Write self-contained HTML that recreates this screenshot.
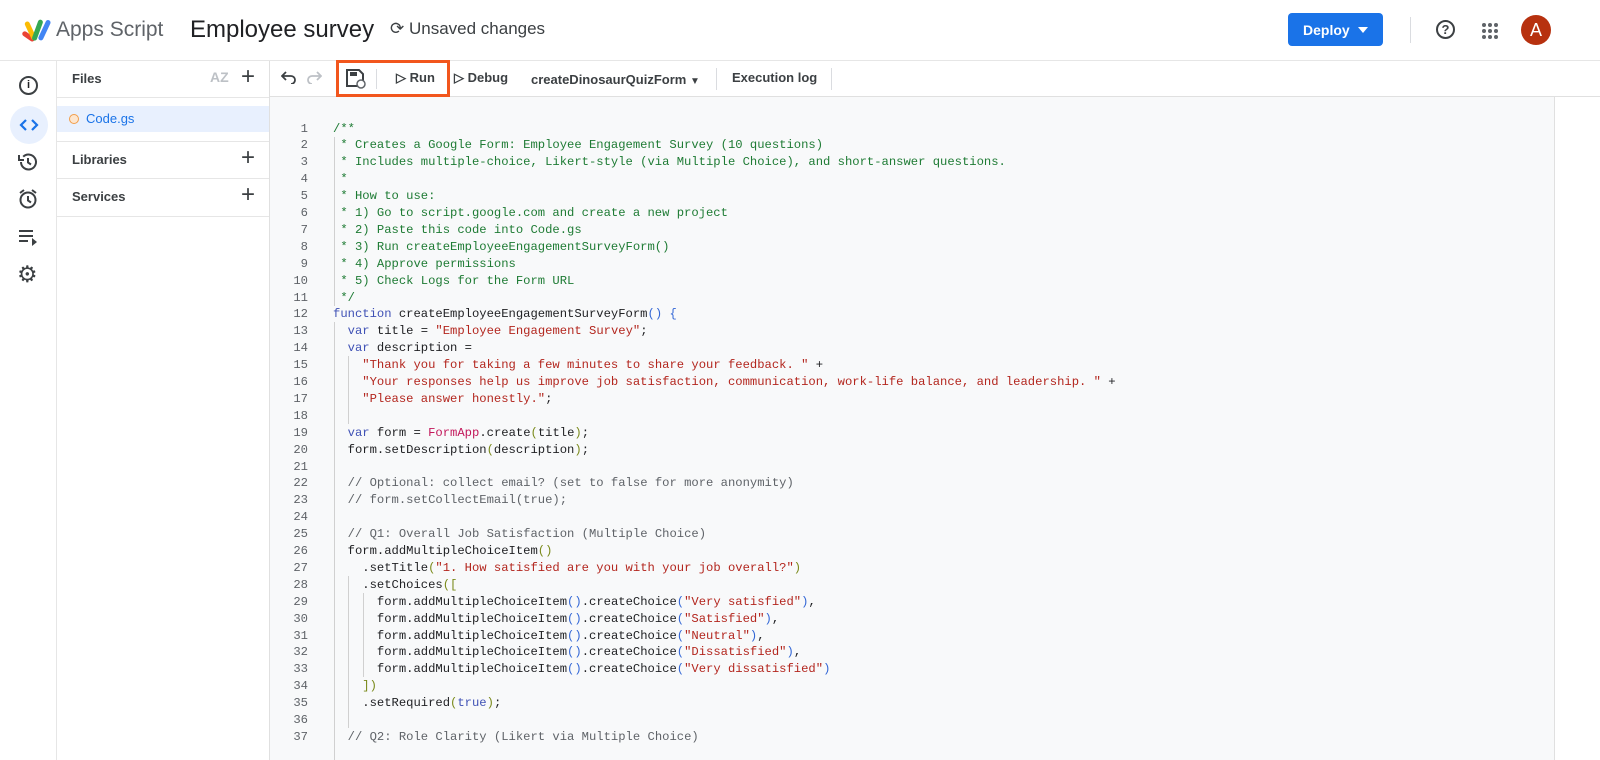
<!DOCTYPE html>
<html><head><meta charset="utf-8"><style>
*{margin:0;padding:0;box-sizing:border-box}
body{width:1600px;height:760px;overflow:hidden;background:#fff;font-family:"Liberation Sans",Arial,sans-serif;position:relative;color:#202124}
.a{position:absolute}
.hd{top:0;left:0;width:1600px;height:61px;border-bottom:1px solid #e6e6e6}
.code{left:270px;top:97px;width:1284px;height:663px;background:#f8f9fa}
.ln{position:absolute;left:270px;width:38px;text-align:right;font:12.2px/16.9px "Liberation Mono",monospace;color:#5f6368}
.cl{position:absolute;left:333px;white-space:pre;font:12.2px/16.9px "Liberation Mono",monospace;color:#202124}
.c{color:#1e7b34}.k{color:#3f51b5}.s{color:#b3261e}.m{color:#c2185b}.g{color:#5f6368}.b{color:#3367d6}.p{color:#7a8a1a}
.gd{position:absolute;width:1px;background:#d0d0d0}
.tb{font-size:13px;font-weight:bold;color:#3c4043}
</style></head><body>
<div class="a hd"></div>
<svg class="a" style="left:20px;top:17px" width="32" height="28" viewBox="0 0 32 28">
<rect x="3" y="13" width="14" height="5" rx="2.5" transform="rotate(35 3 15)" fill="#ea4335"/>
<rect x="8" y="4" width="5" height="20" rx="2.5" transform="rotate(-25 10 14)" fill="#fbbc04"/>
<rect x="15" y="2" width="5" height="22" rx="2.5" transform="rotate(20 17 13)" fill="#34a853"/>
<rect x="22" y="2" width="5" height="22" rx="2.5" transform="rotate(25 24 13)" fill="#4285f4"/>
</svg>
<div class="a" style="left:56px;top:18px;font-size:21px;color:#5f6368">Apps Script</div>
<div class="a" style="left:190px;top:16px;font-size:24px;color:#202124">Employee survey</div>
<div class="a" style="left:390px;top:19px;font-size:17px;color:#3c4043">⟳ Unsaved changes</div>
<div class="a" style="left:1288px;top:13px;width:95px;height:33px;background:#1a73e8;border-radius:4px;color:#fff;font-size:14px;font-weight:bold;padding:9px 0 0 15px">Deploy</div>
<div class="a" style="left:1358px;top:27px;border:5px solid transparent;border-top:6px solid #fff;border-bottom:0"></div>
<div class="a" style="left:1410px;top:17px;width:1px;height:26px;background:#dadce0"></div>
<div class="a" style="left:1436px;top:20px;width:19px;height:19px;border:2px solid #3c4043;border-radius:50%;font-size:13px;font-weight:bold;text-align:center;line-height:15px;color:#3c4043">?</div>
<svg class="a" style="left:1481px;top:22px" width="18" height="18"><g fill="#5f6368"><circle cx="3" cy="3" r="2"/><circle cx="9" cy="3" r="2"/><circle cx="15" cy="3" r="2"/><circle cx="3" cy="9" r="2"/><circle cx="9" cy="9" r="2"/><circle cx="15" cy="9" r="2"/><circle cx="3" cy="15" r="2"/><circle cx="9" cy="15" r="2"/><circle cx="15" cy="15" r="2"/></g></svg>
<div class="a" style="left:1521px;top:15px;width:30px;height:30px;border-radius:50%;background:#b7310f;color:#fff;font-size:18px;text-align:center;line-height:30px">A</div>
<div class="a" style="left:56px;top:61px;width:1px;height:699px;background:#e6e6e6"></div>
<div class="a" style="left:19px;top:76px;width:19px;height:19px;border:2px solid #3c4043;border-radius:50%;font-size:11px;font-weight:bold;text-align:center;line-height:15px">i</div>
<div class="a" style="left:10px;top:106px;width:38px;height:38px;border-radius:50%;background:#e8f0fe"></div>
<svg class="a" style="left:19px;top:117px" width="20" height="16"><path d="M7 3L2 8l5 5M13 3l5 5-5 5" stroke="#1a73e8" stroke-width="2.2" fill="none"/></svg>
<svg class="a" style="left:17px;top:151px" width="22" height="22" viewBox="0 0 22 22"><path d="M4 11a7.5 7.5 0 1 0 2.2-5.3" stroke="#3c4043" stroke-width="2" fill="none"/><path d="M2 4v5h5" fill="none" stroke="#3c4043" stroke-width="2"/><path d="M11 7v4.5l3 2" stroke="#3c4043" stroke-width="2" fill="none"/></svg>
<svg class="a" style="left:17px;top:188px" width="22" height="22" viewBox="0 0 22 22"><circle cx="11" cy="12" r="7.5" stroke="#3c4043" stroke-width="2" fill="none"/><path d="M11 8v4.5l3 2M3 5l4-3M19 5l-4-3" stroke="#3c4043" stroke-width="2" fill="none"/></svg>
<svg class="a" style="left:18px;top:229px" width="22" height="18"><path d="M1 2h14M1 7h14M1 12h9" stroke="#3c4043" stroke-width="2"/><path d="M14 9l5 4-5 4z" fill="#3c4043"/></svg>
<div class="a" style="left:17px;top:261px;font-size:23px;color:#3c4043">⚙</div>
<div class="a" style="left:269px;top:61px;width:1px;height:699px;background:#e0e0e0"></div>
<div class="a" style="left:72px;top:71px;font-size:13px;font-weight:bold;color:#3c4043">Files</div>
<div class="a" style="left:210px;top:69px;font-size:14px;font-weight:bold;color:#bdc1c6">AZ</div>
<div class="a" style="left:241px;top:63px;font-size:24px;color:#3c4043">+</div>
<div class="a" style="left:57px;top:97px;width:212px;height:1px;background:#e6e6e6"></div>
<div class="a" style="left:57px;top:106px;width:212px;height:26px;background:#e8f0fe"></div>
<div class="a" style="left:69px;top:114px;width:10px;height:10px;border:1.5px solid #f29d49;border-radius:50%;background:#fde6cf"></div>
<div class="a" style="left:86px;top:111px;font-size:13px;color:#1a73e8">Code.gs</div>
<div class="a" style="left:57px;top:141px;width:212px;height:1px;background:#e6e6e6"></div>
<div class="a" style="left:72px;top:152px;font-size:13px;font-weight:bold;color:#3c4043">Libraries</div>
<div class="a" style="left:241px;top:144px;font-size:24px;color:#3c4043">+</div>
<div class="a" style="left:57px;top:178px;width:212px;height:1px;background:#e6e6e6"></div>
<div class="a" style="left:72px;top:189px;font-size:13px;font-weight:bold;color:#3c4043">Services</div>
<div class="a" style="left:241px;top:181px;font-size:24px;color:#3c4043">+</div>
<div class="a" style="left:57px;top:216px;width:212px;height:1px;background:#e6e6e6"></div>
<div class="a" style="left:270px;top:96px;width:1330px;height:1px;background:#e0e0e0"></div>
<svg class="a" style="left:281px;top:70px" width="16" height="14"><path d="M5 2L1 6l4 4M1 6h9a4 4 0 0 1 0 8" stroke="#3c4043" stroke-width="1.8" fill="none"/></svg>
<svg class="a" style="left:306px;top:70px" width="16" height="14"><path d="M11 2l4 4-4 4M15 6H6a4 4 0 0 0 0 8" stroke="#bdc1c6" stroke-width="1.8" fill="none"/></svg>
<svg class="a" style="left:345px;top:68px" width="22" height="22"><path d="M2 2h12l4 4v12H2z" stroke="#3c4043" stroke-width="2" fill="none"/><rect x="5" y="4" width="7" height="4" fill="#3c4043"/><circle cx="16" cy="16" r="4" fill="#fff" stroke="#5f6368" stroke-width="1.5"/></svg>
<div class="a" style="left:376px;top:69px;width:1px;height:20px;background:#dadce0"></div>
<div class="a tb" style="left:396px;top:70px">▷ Run</div>
<div class="a" style="left:336px;top:60px;width:114px;height:37px;border:3px solid #f2561d"></div>
<div class="a tb" style="left:454px;top:70px">▷ Debug</div>
<div class="a tb" style="left:531px;top:72px">createDinosaurQuizForm <span style="font-size:10px">▼</span></div>
<div class="a" style="left:716px;top:68px;width:1px;height:22px;background:#dadce0"></div>
<div class="a tb" style="left:732px;top:70px">Execution log</div>
<div class="a" style="left:831px;top:68px;width:1px;height:22px;background:#dadce0"></div>
<div class="a code"></div>
<div class="a" style="left:1554px;top:97px;width:1px;height:663px;background:#e0e0e0"></div>
<div class="gd" style="left:334px;top:137px;height:169px"></div>
<div class="gd" style="left:334px;top:322px;height:438px"></div>
<div class="gd" style="left:348px;top:356px;height:68px"></div>
<div class="gd" style="left:348px;top:576px;height:152px"></div>
<div class="gd" style="left:363px;top:593px;height:84px"></div>
<div id="code"></div>
<script>
const L=[
'<span class="c">/**</span>',
'<span class="c"> * Creates a Google Form: Employee Engagement Survey (10 questions)</span>',
'<span class="c"> * Includes multiple-choice, Likert-style (via Multiple Choice), and short-answer questions.</span>',
'<span class="c"> *</span>',
'<span class="c"> * How to use:</span>',
'<span class="c"> * 1) Go to script.google.com and create a new project</span>',
'<span class="c"> * 2) Paste this code into Code.gs</span>',
'<span class="c"> * 3) Run createEmployeeEngagementSurveyForm()</span>',
'<span class="c"> * 4) Approve permissions</span>',
'<span class="c"> * 5) Check Logs for the Form URL</span>',
'<span class="c"> */</span>',
'<span class="k">function</span> createEmployeeEngagementSurveyForm<span class="b">() {</span>',
'  <span class="k">var</span> title = <span class="s">"Employee Engagement Survey"</span>;',
'  <span class="k">var</span> description =',
'    <span class="s">"Thank you for taking a few minutes to share your feedback. "</span> +',
'    <span class="s">"Your responses help us improve job satisfaction, communication, work-life balance, and leadership. "</span> +',
'    <span class="s">"Please answer honestly."</span>;',
'',
'  <span class="k">var</span> form = <span class="m">FormApp</span>.create<span class="p">(</span>title<span class="p">)</span>;',
'  form.setDescription<span class="p">(</span>description<span class="p">)</span>;',
'',
'  <span class="g">// Optional: collect email? (set to false for more anonymity)</span>',
'  <span class="g">// form.setCollectEmail(true);</span>',
'',
'  <span class="g">// Q1: Overall Job Satisfaction (Multiple Choice)</span>',
'  form.addMultipleChoiceItem<span class="p">()</span>',
'    .setTitle<span class="p">(</span><span class="s">"1. How satisfied are you with your job overall?"</span><span class="p">)</span>',
'    .setChoices<span class="p">([</span>',
'      form.addMultipleChoiceItem<span class="b">()</span>.createChoice<span class="b">(</span><span class="s">"Very satisfied"</span><span class="b">)</span>,',
'      form.addMultipleChoiceItem<span class="b">()</span>.createChoice<span class="b">(</span><span class="s">"Satisfied"</span><span class="b">)</span>,',
'      form.addMultipleChoiceItem<span class="b">()</span>.createChoice<span class="b">(</span><span class="s">"Neutral"</span><span class="b">)</span>,',
'      form.addMultipleChoiceItem<span class="b">()</span>.createChoice<span class="b">(</span><span class="s">"Dissatisfied"</span><span class="b">)</span>,',
'      form.addMultipleChoiceItem<span class="b">()</span>.createChoice<span class="b">(</span><span class="s">"Very dissatisfied"</span><span class="b">)</span>',
'    <span class="p">])</span>',
'    .setRequired<span class="p">(</span><span class="k">true</span><span class="p">)</span>;',
'',
'  <span class="g">// Q2: Role Clarity (Likert via Multiple Choice)</span>'];
let h='';L.forEach((t,i)=>{const y=120.5+16.9*i;h+=`<div class="ln" style="top:${y}px">${i+1}</div><div class="cl" style="top:${y}px">${t}</div>`});
document.getElementById('code').innerHTML=h;
</script>
</body></html>
